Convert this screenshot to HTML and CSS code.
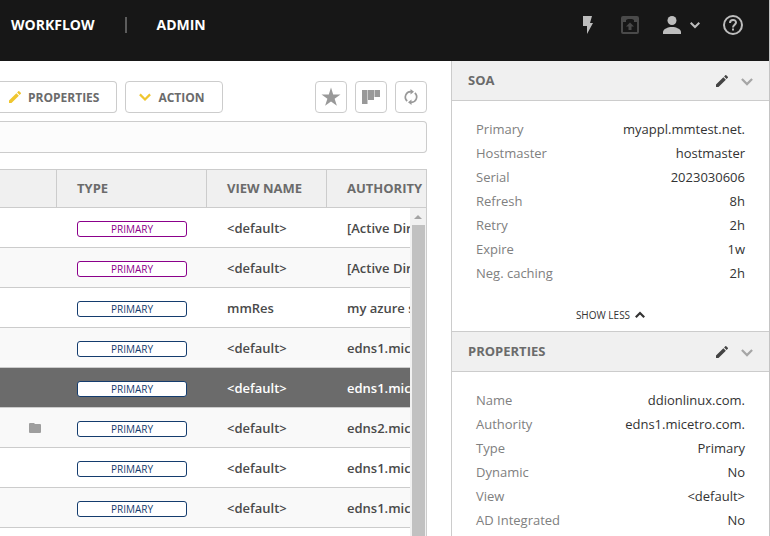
FILE: index.html
```html
<!DOCTYPE html>
<html lang="en">
<head>
<meta charset="utf-8">
<title>DNS zones</title>
<link rel="stylesheet" href="styles.css">
</head>
<body>
<div class="app">
  <header class="topbar">
    <nav class="nav">
      <a class="nav-link" href="#workflow">WORKFLOW</a>
      <span class="nav-divider"></span>
      <a class="nav-link" href="#admin">ADMIN</a>
    </nav>
    <div class="tools">
      <button class="tool" type="button" aria-label="Quick actions"><svg width="20" height="20" viewBox="0 0 20 20"><path d="M5 1h9l-2 7h3L9 19v-8H5z" fill="#bdbdbd"/></svg></button>
      <button class="tool" type="button" aria-label="Backup"><svg width="20" height="20" viewBox="0 0 20 20"><path fill-rule="evenodd" d="M3 1h14q2 0 2 2v14q0 2-2 2H3q-2 0-2-2V3q0-2 2-2zM3 7v10h14V7h-3V5l-2-1H8L6 5v2z" fill="#4a4a4a"/><path d="M10 7.500l4 4h-2.500V15h-3v-3.500H6z" fill="#4a4a4a"/></svg></button>
      <button class="tool" type="button" aria-label="User menu"><svg width="20" height="20" viewBox="0 0 20 20"><circle cx="10" cy="5.500" r="4.500" fill="#bdbdbd"/><path d="M1 19v-2c0-3 5-5 9-5s9 2 9 5v2z" fill="#bdbdbd"/></svg><svg class="user-caret" width="10" height="10" viewBox="0 0 10 10"><path d="M.7 2.700L5 7l4.300-4.300" fill="none" stroke="#bdbdbd" stroke-width="2"/></svg></button>
      <button class="tool" type="button" aria-label="Help"><svg width="22" height="22" viewBox="0 0 22 22"><circle cx="11" cy="11" r="9" fill="none" stroke="#bdbdbd" stroke-width="2"/><path d="M8 9c0-4 6-4 6-.5 0 2-3 2.500-3 5" fill="none" stroke="#bdbdbd" stroke-width="2"/><path d="M10 14.500h2v2h-2z" fill="#bdbdbd"/></svg></button>
    </div>
  </header>
  <div class="body">
    <main class="main">
      <div class="toolbar">
        <button class="btn btn-cut" type="button"><svg width="12" height="12" viewBox="3 3 18 18"><path d="M3 17.250V21h3.750L17.810 9.940l-3.750-3.750zM20.710 7.040a1 1 0 0 0 0-1.410l-2.340-2.340a1 1 0 0 0-1.410 0l-1.830 1.830 3.750 3.750z" fill="#efc62f"/></svg>PROPERTIES</button>
        <button class="btn" type="button"><svg width="12" height="12" viewBox="0 0 12 12"><path d="M.9 3.400L6 8.500l5.100-5.100" fill="none" stroke="#efc62f" stroke-width="2.200"/></svg>ACTION</button>
        <div class="toolbar-icons">
          <button class="icon-btn" type="button" aria-label="Favorites"><svg width="20" height="20" viewBox="0 0 20 20"><path d="M10 .5l2.200 7H19.500l-5.900 4.200 2.300 7L10 14.400l-5.900 4.300 2.300-7L.5 7.500h7.300z" fill="#999"/></svg></button>
          <button class="icon-btn" type="button" aria-label="Columns"><svg width="20" height="20" viewBox="0 0 20 20"><path d="M1 3h5.500v14H1zM7 3h6v10H7zM13.500 3H19v7h-5.500z" fill="#999"/></svg></button>
          <button class="icon-btn" type="button" aria-label="Refresh"><svg width="16" height="16" viewBox="0 0 16 16"><path d="M4.200 12A5.300 5.300 0 0 1 8 2.700M11.800 4A5.300 5.300 0 0 1 8 13.300" fill="none" stroke="#999" stroke-width="1.700"/><path d="M7.500 0L11 2.700 7.500 5.400zM8.500 10.600L5 13.300 8.500 16z" fill="#999"/></svg></button>
        </div>
      </div>
      <input class="search" type="text" aria-label="Filter zones">
      <div class="grid">
        <table class="zones">
          <colgroup><col class="col-mark"><col class="col-type"><col class="col-view"><col></colgroup>
          <thead><tr><th></th><th>TYPE</th><th>VIEW NAME</th><th>AUTHORITY</th></tr></thead>
          <tbody>
            <tr><td></td><td class="type"><span class="badge badge-ad">PRIMARY</span></td><td>&lt;default&gt;</td><td>[Active Directory]</td></tr>
            <tr><td></td><td class="type"><span class="badge badge-ad">PRIMARY</span></td><td>&lt;default&gt;</td><td>[Active Directory]</td></tr>
            <tr><td></td><td class="type"><span class="badge">PRIMARY</span></td><td>mmRes</td><td>my azure subscription</td></tr>
            <tr><td></td><td class="type"><span class="badge">PRIMARY</span></td><td>&lt;default&gt;</td><td>edns1.micetro.com.</td></tr>
            <tr class="selected"><td></td><td class="type"><span class="badge">PRIMARY</span></td><td>&lt;default&gt;</td><td>edns1.micetro.com.</td></tr>
            <tr><td class="mark"><svg width="12" height="12" viewBox="0 0 12 12"><path d="M0 2q0-1 1-1h4l1 1h5q1 0 1 1v7q0 1-1 1H1q-1 0-1-1z" fill="#9e9e9e"/></svg></td><td class="type"><span class="badge">PRIMARY</span></td><td>&lt;default&gt;</td><td>edns2.micetro.com.</td></tr>
            <tr><td></td><td class="type"><span class="badge">PRIMARY</span></td><td>&lt;default&gt;</td><td>edns1.micetro.com.</td></tr>
            <tr><td></td><td class="type"><span class="badge">PRIMARY</span></td><td>&lt;default&gt;</td><td>edns1.micetro.com.</td></tr>
            <tr><td></td><td></td><td></td><td></td></tr>
          </tbody>
        </table>
        <div class="scrollbar"><span class="scroll-up"></span><span class="thumb"></span></div>
      </div>
    </main>
    <aside class="side">
      <section>
        <div class="panel-head"><h2>SOA</h2>
          <button type="button" aria-label="Edit SOA"><svg width="12" height="12" viewBox="3 3 18 18"><path d="M3 17.250V21h3.750L17.810 9.940l-3.750-3.750zM20.710 7.040a1 1 0 0 0 0-1.410l-2.340-2.340a1 1 0 0 0-1.410 0l-1.830 1.830 3.750 3.750z" fill="#444"/></svg></button>
          <button type="button" aria-label="Collapse SOA"><svg width="12" height="12" viewBox="0 0 12 12"><path d="M.9 4L6 9.100 11.100 4" fill="none" stroke="#a6a6a6" stroke-width="2.200"/></svg></button>
        </div>
        <dl class="props">
          <div><dt>Primary</dt><dd>myappl.mmtest.net.</dd></div>
          <div><dt>Hostmaster</dt><dd>hostmaster</dd></div>
          <div><dt>Serial</dt><dd>2023030606</dd></div>
          <div><dt>Refresh</dt><dd>8h</dd></div>
          <div><dt>Retry</dt><dd>2h</dd></div>
          <div><dt>Expire</dt><dd>1w</dd></div>
          <div><dt>Neg. caching</dt><dd>2h</dd></div>
        </dl>
        <button class="less" type="button">SHOW LESS<svg width="10" height="10" viewBox="0 0 10 10"><path d="M.8 7.200L5 3l4.200 4.200" fill="none" stroke="#333" stroke-width="2.200"/></svg></button>
      </section>
      <section class="panel-next">
        <div class="panel-head"><h2>PROPERTIES</h2>
          <button type="button" aria-label="Edit properties"><svg width="12" height="12" viewBox="3 3 18 18"><path d="M3 17.250V21h3.750L17.810 9.940l-3.750-3.750zM20.710 7.040a1 1 0 0 0 0-1.410l-2.340-2.340a1 1 0 0 0-1.410 0l-1.830 1.830 3.750 3.750z" fill="#444"/></svg></button>
          <button type="button" aria-label="Collapse properties"><svg width="12" height="12" viewBox="0 0 12 12"><path d="M.9 4L6 9.100 11.100 4" fill="none" stroke="#a6a6a6" stroke-width="2.200"/></svg></button>
        </div>
        <dl class="props">
          <div><dt>Name</dt><dd>ddionlinux.com.</dd></div>
          <div><dt>Authority</dt><dd>edns1.micetro.com.</dd></div>
          <div><dt>Type</dt><dd>Primary</dd></div>
          <div><dt>Dynamic</dt><dd>No</dd></div>
          <div><dt>View</dt><dd>&lt;default&gt;</dd></div>
          <div><dt>AD Integrated</dt><dd>No</dd></div>
        </dl>
      </section>
    </aside>
  </div>
</div>
</body>
</html>
```
FILE: styles.css
```css
* {
  box-sizing: border-box;
}

body {
  margin: 0;
  font-family: "Open Sans", sans-serif;
  font-size: 13px;
  color: #333;
  background: #fff;
}

button {
  margin: 0;
  padding: 0;
  border: 0;
  background: none;
  font-family: inherit;
  cursor: pointer;
}

svg {
  display: block;
  flex: none;
}

.app {
  display: flex;
  flex-direction: column;
  height: 100vh;
  overflow: hidden;
  border-right: 1px solid #c4c4c4;
}

/* Top bar */
.topbar {
  display: flex;
  flex: none;
  justify-content: space-between;
  align-items: flex-start;
  padding: 14px 25px 25px 11px;
  background: #171717;
}

.nav,
.tools {
  display: flex;
  align-items: center;
  height: 22px;
}

.nav {
  gap: 30px;
}

.nav-link {
  color: #fff;
  font-size: 14px;
  font-weight: 700;
  line-height: 20px;
  text-decoration: none;
}

.nav-divider {
  width: 2px;
  height: 16px;
  background: #5c5c5c;
}

.tools {
  gap: 22px;
}

.tool {
  display: flex;
  align-items: center;
}

.user-caret {
  margin-left: 8px;
}

/* Columns */
.body {
  display: flex;
  flex: 1;
  min-height: 0;
}

.main {
  display: flex;
  flex: 1;
  flex-direction: column;
  min-width: 0;
  padding: 20px 24px 0 0;
}

.toolbar {
  display: flex;
  gap: 8px;
}

.btn,
.icon-btn {
  display: flex;
  align-items: center;
  justify-content: center;
  height: 32px;
  border: 1px solid #ccc;
  border-radius: 4px;
  background: #fff;
}

.btn {
  gap: 7px;
  padding: 0 17px 0 13px;
  color: #6b6b6b;
  font-size: 12px;
  font-weight: 700;
}

.btn-cut {
  padding-left: 9px;
  border-left: 0;
  border-radius: 0 4px 4px 0;
}

.icon-btn {
  width: 32px;
}

.toolbar-icons {
  display: flex;
  gap: 8px;
  margin-left: auto;
}

.search {
  flex: none;
  width: 100%;
  height: 32px;
  margin: 8px 0 16px;
  padding: 0 12px;
  border: 1px solid #ccc;
  border-left: 0;
  border-radius: 0 4px 4px 0;
  background: #fcfcfc;
  font-family: inherit;
}

/* Zone table */
.grid {
  position: relative;
  flex: 1;
  min-height: 0;
  overflow: hidden;
  border: 1px solid #ccc;
  border-width: 1px 1px 0 0;
}

.zones {
  width: 100%;
  table-layout: fixed;
  border-collapse: separate;
  border-spacing: 0;
}

.col-mark {
  width: 57px;
}

.col-type {
  width: 150px;
}

.col-view {
  width: 120px;
}

.zones th,
.zones td {
  height: 40px;
  padding: 0 0 0 20px;
  border-bottom: 1px solid #ccc;
  overflow: hidden;
  text-align: left;
  white-space: nowrap;
}

.zones th {
  height: 38px;
  padding-bottom: 1px;
  background: #f0f0f0;
  border-right: 1px solid #ccc;
  color: #6b6b6b;
  font-weight: 700;
}

.zones th:last-child {
  border-right: 0;
}

.zones td {
  color: #4a4a4a;
  font-weight: 600;
}

.zones tbody tr:nth-child(even) {
  background: #f9f9f9;
}

.zones .selected {
  background: #6b6b6b;
}

.zones .selected td {
  color: #fff;
}

.zones .mark {
  padding-left: 29px;
}

.zones .type {
  padding-top: 2px;
}

.badge {
  display: block;
  width: 110px;
  border: 1px solid #143c6e;
  border-radius: 3px;
  background: #fff;
  color: #143c6e;
  font-size: 10px;
  font-weight: 400;
  line-height: 14px;
  text-align: center;
}

.badge-ad {
  border-color: #8b008b;
  color: #8b008b;
}

.scrollbar {
  position: absolute;
  top: 38px;
  right: 0;
  bottom: 0;
  display: flex;
  flex-direction: column;
  align-items: center;
  width: 16px;
  background: #f1f1f1;
}

.scroll-up {
  margin: 7px 0 6px;
  border: 4px solid transparent;
  border-top: 0;
  border-bottom-color: #a3a3a3;
}

.thumb {
  flex: 1;
  width: 13px;
  background: #c1c1c1;
}

/* Details */
.side {
  flex: none;
  width: 318px;
  border-left: 1px solid #ccc;
}

.panel-head {
  display: flex;
  align-items: center;
  gap: 13px;
  height: 40px;
  padding: 0 16px;
  border-bottom: 1px solid #ccc;
  background: #f0f0f0;
}

.panel-head h2 {
  flex: 1;
  margin: 0;
  padding-bottom: 2px;
  color: #6b6b6b;
  font-size: 13px;
  font-weight: 700;
}

.panel-next {
  border-top: 1px solid #ccc;
}

.props {
  margin: 0;
  padding: 16px 24px 0;
}

.props div {
  display: flex;
  justify-content: space-between;
  line-height: 24px;
}

.props dt {
  color: #808080;
}

.props dd {
  margin: 0;
  color: #333;
}

.less {
  display: flex;
  align-items: center;
  gap: 5px;
  margin: 22px auto 8px;
  color: #333;
  font-size: 10px;
  line-height: 16px;
}
```
